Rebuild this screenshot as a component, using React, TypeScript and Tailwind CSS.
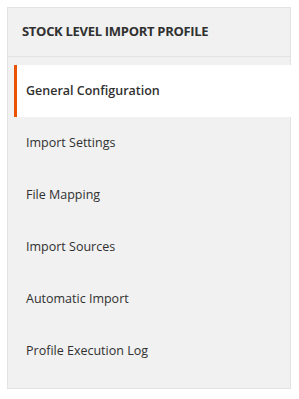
const items = [
  "General Configuration",
  "Import Settings",
  "File Mapping",
  "Import Sources",
  "Automatic Import",
  "Profile Execution Log",
];

export default function App() {
  return (
    <div className="min-h-[399px] w-[299px] bg-white pt-[7px] pl-[7px] font-['Open_Sans',sans-serif] text-[#303030]">
      <div className="w-[284px] border border-[#e3e3e3] bg-[#f1f1f1] pb-[11px]">
        <div className="flex h-[49px] items-center border-b border-[#e3e3e3] pl-[14px] text-[13px] font-bold tracking-[-0.3px] uppercase">
          Stock Level Import Profile
        </div>
        <ul className="mt-[8px]">
          {items.map((item, i) => (
            <li
              key={item}
              className={`ml-[6px] flex h-[52px] items-center border-l-[3px] pl-[9px] text-[12.5px] ${
                i === 0
                  ? "mr-[-9px] border-[#eb5202] bg-white font-semibold"
                  : "border-transparent"
              }`}
            >
              {item}
            </li>
          ))}
        </ul>
      </div>
    </div>
  );
}
